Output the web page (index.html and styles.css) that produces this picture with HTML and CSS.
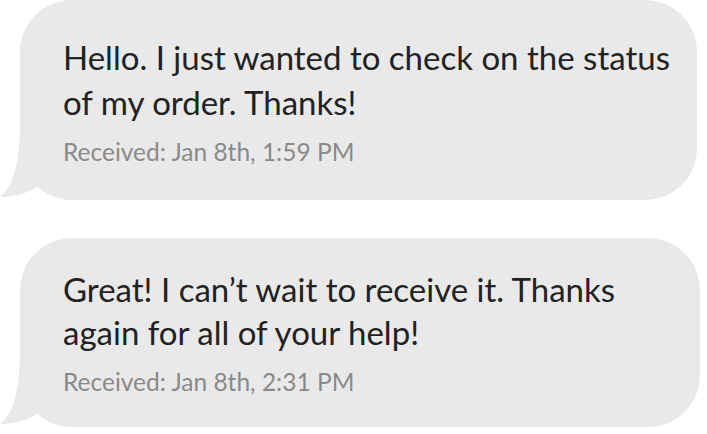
FILE: index.html
```html
<!DOCTYPE html>
<html lang="en">
<head>
<meta charset="utf-8">
<link rel="stylesheet" href="styles.css">
</head>
<body>
<div class="chat">
  <div class="bubble bubble-first">
    <svg class="tail" width="70" height="80" viewBox="0 0 70 80"><path d="M20 0 C20 40 15 65 0 77 C15 77 32 72 42 63 C48 70 56 76 70 80 L70 0 Z"/></svg>
    <p class="msg">Hello. I just wanted to check on the status<br>of my order. Thanks!</p>
    <p class="meta">Received: Jan 8th, 1:59 PM</p>
  </div>
  <div class="bubble bubble-second">
    <svg class="tail" width="70" height="80" viewBox="0 0 70 80"><path d="M20 0 C20 40 15 65 0 77 C15 77 32 72 42 63 C48 70 56 76 70 80 L70 0 Z"/></svg>
    <p class="msg">Great! I can’t wait to receive it. Thanks<br>again for all of your help!</p>
    <p class="meta">Received: Jan 8th, 2:31 PM</p>
  </div>
</div>
</body>
</html>
```
FILE: styles.css
```css
html, body {
  margin: 0;
  padding: 0;
  background: #ffffff;
}
body {
  width: 707px;
  height: 434px;
  overflow: hidden;
  font-family: Lato, "Open Sans", sans-serif;
}
.chat {
  display: flex;
  flex-direction: column;
  gap: 38px;
}
.bubble {
  position: relative;
  margin-left: 20px;
  background: #e9e9e9;
  border-radius: 52px;
  padding: 0 0 0 43px;
  box-sizing: border-box;
}
.bubble-first {
  width: 677px;
  height: 200px;
  padding-top: 35px;
}
.bubble-second {
  width: 680px;
  height: 189px;
  padding-top: 30px;
}
.tail {
  position: absolute;
  left: -20px;
  bottom: 0;
  fill: #e9e9e9;
}
.msg {
  position: relative;
  margin: 0;
  font-size: 33px;
  line-height: 45px;
  color: #222222;
}
.bubble-second .msg {
  line-height: 43px;
}
.meta {
  position: relative;
  margin: 7px 0 0;
  font-size: 24.5px;
  line-height: 40px;
  color: #8a8a8a;
}
.bubble-second .meta {
  margin-top: 8px;
}
```
